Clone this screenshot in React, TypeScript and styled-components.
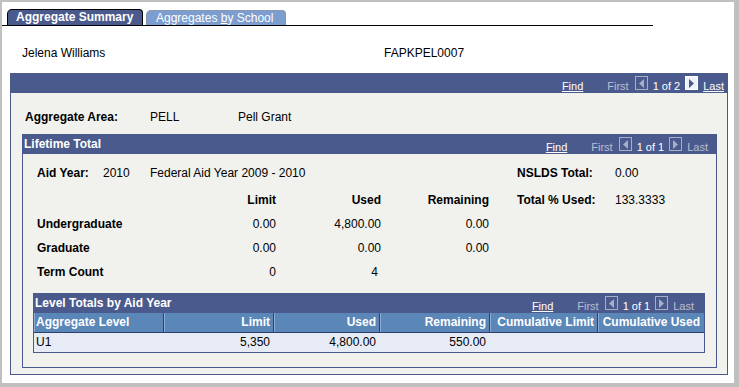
import React from 'react';
import styled, { createGlobalStyle } from 'styled-components';

const BLUE = '#4b5a8c';
const BODY_BG = '#f1f2ee';

const GlobalStyle = createGlobalStyle`
  html, body { margin: 0; padding: 0; background: #fff; }
  body {
    font-family: "Liberation Sans", Arial, Helvetica, sans-serif;
    font-size: 12px;
    color: #000;
  }
`;

const Frame = styled.div`
  width: 739px;
  height: 387px;
  box-sizing: border-box;
  border-style: solid;
  border-color: #c0c0c0;
  border-width: 2px 5px 4px 2px;
  background: #fff;
  overflow: hidden;
`;

const TabBar = styled.div`
  display: flex;
  align-items: flex-end;
  width: 646px;
  height: 16px;
  padding: 7px 0 0 5px;
  border-bottom: 1px solid #000;
`;

const Tab = styled.div<{ $active?: boolean }>`
  box-sizing: border-box;
  height: ${(p) => (p.$active ? 16 : 15)}px;
  width: ${(p) => (p.$active ? 136 : 140)}px;
  margin-left: ${(p) => (p.$active ? 0 : 3)}px;
  padding-left: ${(p) => (p.$active ? 8 : 9)}px;
  background: ${(p) => (p.$active ? BLUE : '#7b9dcf')};
  border: 1px solid ${(p) => (p.$active ? '#000' : '#8a97b0')};
  border-bottom: none;
  border-radius: 5px 4px 0 0;
  color: #fff;
  font-weight: ${(p) => (p.$active ? 700 : 400)};
  line-height: ${(p) => (p.$active ? 15 : 14)}px;
  white-space: nowrap;
`;

const InfoRow = styled.div`
  display: flex;
  margin-top: 20px;
  padding-left: 20px;
  line-height: 14px;
`;

const InfoName = styled.div`
  width: 362px;
`;

const Box = styled.section<{ $mt: number; $ml: number; $mr: number; $w?: number }>`
  margin: ${(p) => `${p.$mt}px ${p.$mr}px 0 ${p.$ml}px`};
  ${(p) => (p.$w ? `width: ${p.$w}px;` : '')}
`;

const PanelHeader = styled.div<{ $pr: number }>`
  height: 20px;
  background: ${BLUE};
  display: flex;
  justify-content: space-between;
  align-items: stretch;
  padding-right: ${(p) => p.$pr}px;
`;

const PanelTitle = styled.div`
  color: #fff;
  font-weight: 700;
  line-height: 20px;
  padding-left: 2px;
  white-space: nowrap;
`;

const PanelBody = styled.div<{ $pad: string }>`
  background: ${BODY_BG};
  border: 1px solid ${BLUE};
  border-top: none;
  padding: ${(p) => p.$pad};
`;

const AreaRow = styled.div`
  display: flex;
  line-height: 14px;
  margin-left: 3px;
`;

const AreaCell = styled.div<{ $w?: number; $bold?: boolean }>`
  ${(p) => (p.$w ? `width: ${p.$w}px;` : '')}
  font-weight: ${(p) => (p.$bold ? 700 : 400)};
  white-space: nowrap;
`;

/* ---------- navigation (Find / First / 1 of n / Last) ---------- */

const NavWrap = styled.div`
  display: flex;
  align-items: flex-end;
  font-size: 11px;
  line-height: 13px;
  white-space: nowrap;
`;

const NavItem = styled.span<{ $enabled?: boolean; $ml?: number }>`
  color: ${(p) => (p.$enabled ? '#fff' : '#b9bfd2')};
  text-decoration: ${(p) => (p.$enabled ? 'underline' : 'none')};
  margin-left: ${(p) => p.$ml ?? 0}px;
`;

const NavCount = styled.span<{ $ml: number }>`
  color: #fff;
  margin-left: ${(p) => p.$ml}px;
`;

const ArrowBox = styled.span<{ $enabled?: boolean; $ml: number }>`
  display: inline-flex;
  align-items: center;
  justify-content: center;
  box-sizing: border-box;
  width: 13px;
  height: 14px;
  margin-left: ${(p) => p.$ml}px;
  margin-bottom: 3px;
  border: 1px solid ${(p) => (p.$enabled ? '#ffffff' : '#a6aec6')};
  background: ${(p) => (p.$enabled ? '#eef1f8' : 'transparent')};
`;

const Arrow: React.FC<{ dir: 'left' | 'right'; enabled?: boolean; ml: number }> = ({ dir, enabled, ml }) => (
  <ArrowBox $enabled={enabled} $ml={ml}>
    <svg width="7" height="9" viewBox="0 0 7 9">
      {dir === 'left' ? (
        <polygon points="6,0 6,9 1,4.5" fill={enabled ? BLUE : '#a6aec6'} />
      ) : (
        <polygon points="1,0 1,9 6,4.5" fill={enabled ? BLUE : '#a6aec6'} />
      )}
    </svg>
  </ArrowBox>
);

const Nav: React.FC<{ total: number; lastEnabled?: boolean }> = ({ total, lastEnabled }) => (
  <NavWrap>
    <NavItem $enabled>Find</NavItem>
    <NavItem $ml={24}>First</NavItem>
    <Arrow dir="left" ml={6} />
    <NavCount $ml={5}>1 of {total}</NavCount>
    <Arrow dir="right" enabled={lastEnabled} ml={5} />
    <NavItem $enabled={lastEnabled} $ml={5}>
      Last
    </NavItem>
  </NavWrap>
);

/* ---------- lifetime totals ---------- */

const Stats = styled.div`
  display: grid;
  grid-template-columns: 66px 47px 46px 80px 105px 108px 28px 98px 1fr;
  grid-template-rows: 24px 27px 24px 24px 24px;
  align-items: end;
  margin-left: 4px;
`;

const StatCell = styled.div<{ $col: string; $row: number; $bold?: boolean; $right?: boolean; $pr?: number }>`
  grid-column: ${(p) => p.$col};
  grid-row: ${(p) => p.$row};
  line-height: 24px;
  font-weight: ${(p) => (p.$bold ? 700 : 400)};
  text-align: ${(p) => (p.$right ? 'right' : 'left')};
  padding-right: ${(p) => p.$pr ?? 0}px;
  white-space: nowrap;
`;

/* ---------- level totals grid ---------- */

const LevelGrid = styled.div`
  margin-top: 9px;
  border: 1px solid ${BLUE};
`;

const GridTitle = styled.div`
  height: 19px;
  background: ${BLUE};
  display: flex;
  justify-content: space-between;
  align-items: stretch;
  padding-right: 10px;
`;

const GridTitleText = styled.div`
  color: #fff;
  font-weight: 700;
  line-height: 19px;
  padding-left: 1px;
  white-space: nowrap;
`;

const GridTable = styled.div`
  display: grid;
  grid-template-columns: 130px 110px 106px 110px 108px 106px;
`;

const ColHead = styled.div<{ $left?: boolean; $last?: boolean }>`
  background: #5b86b8;
  color: #fff;
  font-weight: 700;
  height: 19px;
  line-height: 19px;
  text-align: ${(p) => (p.$left ? 'left' : 'right')};
  padding: 0 ${(p) => (p.$last ? 4 : 3)}px 0 2px;
  border-bottom: 1px solid #2f3f6e;
  border-right: ${(p) => (p.$last ? 'none' : '1px solid #2f3f6e')};
  box-shadow: inset 1px 0 0 #8fabd3;
  white-space: nowrap;
  overflow: hidden;
`;

const DataCell = styled.div<{ $left?: boolean }>`
  background: #e7ebf5;
  height: 19px;
  line-height: 19px;
  text-align: ${(p) => (p.$left ? 'left' : 'right')};
  padding: 0 4px 0 2px;
  white-space: nowrap;
`;

const columns = [
  { label: 'Aggregate Level', left: true },
  { label: 'Limit' },
  { label: 'Used' },
  { label: 'Remaining' },
  { label: 'Cumulative Limit' },
  { label: 'Cumulative Used' },
];

const rows = [['U1', '5,350', '4,800.00', '550.00', '', '']];

export default function App() {
  return (
    <>
      <GlobalStyle />
      <Frame>
        <TabBar>
          <Tab $active>Aggregate Summary</Tab>
          <Tab>
            Aggregates <u>b</u>y School
          </Tab>
        </TabBar>

        <InfoRow>
          <InfoName>Jelena Williams</InfoName>
          <div>FAPKPEL0007</div>
        </InfoRow>

        <Box $mt={13} $ml={8} $mr={0} $w={718}>
          <PanelHeader $pr={4}>
            <PanelTitle />
            <Nav total={2} lastEnabled />
          </PanelHeader>
          <PanelBody $pad="17px 10px 6px 11px">
            <AreaRow>
              <AreaCell $w={125} $bold>
                Aggregate Area:
              </AreaCell>
              <AreaCell $w={88}>PELL</AreaCell>
              <AreaCell>Pell Grant</AreaCell>
            </AreaRow>

            <Box $mt={10} $ml={0} $mr={0}>
              <PanelHeader $pr={9}>
                <PanelTitle>Lifetime Total</PanelTitle>
                <Nav total={1} />
              </PanelHeader>
              <PanelBody $pad="7px 11px 14px 10px">
                <Stats>
                  <StatCell $col="1 / 2" $row={1} $bold>Aid Year:</StatCell>
                  <StatCell $col="2 / 3" $row={1}>2010</StatCell>
                  <StatCell $col="3 / 8" $row={1}>Federal Aid Year 2009 - 2010</StatCell>
                  <StatCell $col="8 / 9" $row={1} $bold>NSLDS Total:</StatCell>
                  <StatCell $col="9 / 10" $row={1}>0.00</StatCell>

                  <StatCell $col="4 / 5" $row={2} $bold $right>Limit</StatCell>
                  <StatCell $col="5 / 6" $row={2} $bold $right>Used</StatCell>
                  <StatCell $col="6 / 7" $row={2} $bold $right>Remaining</StatCell>
                  <StatCell $col="8 / 9" $row={2} $bold>Total % Used:</StatCell>
                  <StatCell $col="9 / 10" $row={2}>133.3333</StatCell>

                  <StatCell $col="1 / 4" $row={3} $bold>Undergraduate</StatCell>
                  <StatCell $col="4 / 5" $row={3} $right>0.00</StatCell>
                  <StatCell $col="5 / 6" $row={3} $right>4,800.00</StatCell>
                  <StatCell $col="6 / 7" $row={3} $right>0.00</StatCell>

                  <StatCell $col="1 / 4" $row={4} $bold>Graduate</StatCell>
                  <StatCell $col="4 / 5" $row={4} $right>0.00</StatCell>
                  <StatCell $col="5 / 6" $row={4} $right>0.00</StatCell>
                  <StatCell $col="6 / 7" $row={4} $right>0.00</StatCell>

                  <StatCell $col="1 / 4" $row={5} $bold>Term Count</StatCell>
                  <StatCell $col="4 / 5" $row={5} $right>0</StatCell>
                  <StatCell $col="5 / 6" $row={5} $right $pr={3}>4</StatCell>
                </Stats>

                <LevelGrid>
                  <GridTitle>
                    <GridTitleText>Level Totals by Aid Year</GridTitleText>
                    <Nav total={1} />
                  </GridTitle>
                  <GridTable>
                    {columns.map((c, i) => (
                      <ColHead key={c.label} $left={c.left} $last={i === columns.length - 1}>
                        {c.label}
                      </ColHead>
                    ))}
                    {rows.map((r, ri) =>
                      r.map((v, ci) => (
                        <DataCell key={`${ri}-${ci}`} $left={ci === 0}>
                          {v}
                        </DataCell>
                      ))
                    )}
                  </GridTable>
                </LevelGrid>
              </PanelBody>
            </Box>
          </PanelBody>
        </Box>
      </Frame>
    </>
  );
}
